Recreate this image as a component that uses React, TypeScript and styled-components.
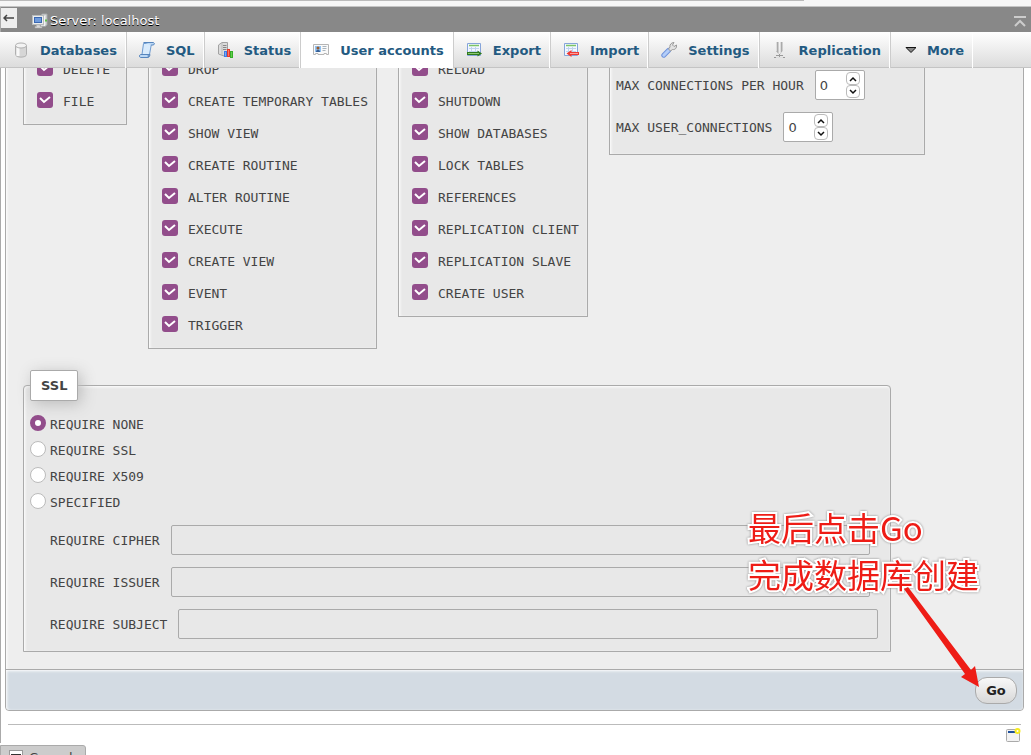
import React from 'react';
import styled, { createGlobalStyle, css } from 'styled-components';

const sans = "'DejaVu Sans', 'Noto Sans CJK SC', sans-serif";
const mono = "'DejaVu Sans Mono', monospace";

const GlobalStyle = createGlobalStyle`
  *, *::before, *::after { box-sizing: border-box; }
  html { height: 100%; overflow: hidden; }
  body {
    margin: 0;
    height: 100%;
    overflow: hidden;
    color: #444;
    background: #fff;
    font-family: ${sans};
    font-size: 13px;
  }
`;

const Page = styled.div`
  position: relative;
  border-left: 1px solid #aaa;
  padding: 32px 7px 0 4px;
`;

const Header = styled.header`
  position: fixed;
  z-index: 5;
  top: 0;
  left: 0;
  right: 0;
`;

const BrowserEdge = styled.div`
  display: flex;
  height: 7px;
  background: #f6f6f6;
  border-bottom: 1px solid #c4c4c4;
`;

const BrowserTab = styled.div`
  width: 78%;
  height: 1px;
  background: #bbb;
`;

const ServerBar = styled.div`
  display: flex;
  align-items: flex-start;
  height: 25px;
  padding-right: 5px;
  background: #888;
  border-left: 1px solid #aaa;
`;

const BackButton = styled.button`
  width: 16px;
  height: 20px;
  margin: 1px 15px 0 0;
  padding: 0;
  border: 0;
  background: #eee;
  line-height: 0;
`;

const ServerLink = styled.a`
  display: flex;
  align-items: flex-end;
  flex: 1;
  height: 22px;
  gap: 2px;
  color: #fff;
  text-decoration: none;
  text-shadow: 0 1px 0 #000;
  line-height: 16px;
`;

const TopButton = styled.button`
  margin: 9px 0 0;
  padding: 0;
  border: 0;
  background: none;
  line-height: 0;
`;

const Tabs = styled.nav`
  display: flex;
  height: 36px;
  padding-left: 1px;
  background: linear-gradient(#fff, #dcdcdc);
  border-bottom: 1px solid #c4c4c4;
`;

const Tab = styled.a<{ $active?: boolean }>`
  display: flex;
  align-items: center;
  gap: 11px;
  height: 36px;
  padding: 0 8px 0 12px;
  border-right: 1px solid #fff;
  box-shadow: 1px 0 0 #ccc;
  margin-right: 1px;
  color: #235a81;
  font-weight: bold;
  text-decoration: none;
  white-space: nowrap;
  ${p => p.$active && css`background: #fff;`}
  &:last-child { box-shadow: none; }
`;

const Panel = styled.main`
  border: 1px solid #aaa;
  border-radius: 4px;
  background: #eee;
  box-shadow: inset 1px 1px 3px #fff;
`;

const Body = styled.div`
  padding: 10px 17px 17px;
`;

const Columns = styled.div`
  display: flex;
  align-items: flex-start;
  gap: 21px;
`;

const box = css`
  margin: 0;
  border: 1px solid #aaa;
  background: #e8e8e8;
  box-shadow: inset 1px 1px 3px #fff;
  font-family: ${mono};
`;

const PrivilegeBox = styled.fieldset`
  ${box}
  min-width: 104px;
  padding: 8px 8px 8px 13px;
`;

const CheckRow = styled.label`
  display: flex;
  align-items: center;
  gap: 10px;
  height: 32px;
  white-space: nowrap;
`;

const Caption = styled.span`
  line-height: 16px;
  padding-top: 3px;
`;

const Check = styled.input`
  appearance: none;
  flex: none;
  width: 16px;
  height: 16px;
  margin: 0;
  border-radius: 3px;
  background: #924d8b;
  &:checked {
    background: #924d8b url("data:image/svg+xml,%3Csvg xmlns='http://www.w3.org/2000/svg' viewBox='0 0 16 16'%3E%3Cpath d='M3 6l4 4 6-5' fill='none' stroke='white' stroke-width='2'/%3E%3C/svg%3E");
  }
`;

const LimitBox = styled.fieldset`
  ${box}
  display: flex;
  flex-direction: column;
  width: 316px;
  gap: 12px;
  padding: 26px 6px 12px;
`;

const LimitRow = styled.div`
  display: flex;
  align-items: center;
  gap: 11px;
  white-space: nowrap;
`;

const Spinner = styled.div`
  display: flex;
  align-items: center;
  width: 50px;
  height: 30px;
  padding: 0 4px;
  border: 1px solid #aaa;
  border-radius: 2px;
  background: #fff;
`;

const NumberBox = styled.input`
  flex: 1;
  width: 10px;
  min-width: 0;
  padding: 0;
  border: 0;
  outline: 0;
  background: none;
  color: #444;
  font: 13px ${sans};
`;

const Steps = styled.div`
  display: flex;
  flex-direction: column;
`;

const Step = styled.button`
  width: 14px;
  height: 13px;
  padding: 0;
  border: 1px solid #bbb;
  border-radius: 4px;
  background: #fff;
  line-height: 0;
`;

const SslBox = styled.fieldset`
  ${box}
  min-width: 0;
  max-width: 868px;
  margin-top: 21px;
  padding: 9px 12px 12px 6px;
  border-radius: 4px 4px 0 0;
`;

const SslLegend = styled.legend`
  padding: 0 10px;
  border: 1px solid #aaa;
  border-radius: 2px;
  background: #fff;
  box-shadow: 3px 3px 15px #bbb;
  font-family: ${sans};
  font-weight: bold;
  line-height: 29px;
`;

const RadioRow = styled.label`
  display: flex;
  align-items: center;
  gap: 4px;
  height: 26px;
`;

const Radio = styled.input`
  appearance: none;
  width: 16px;
  height: 16px;
  margin: 0;
  border: 1px solid #bbb;
  border-radius: 50%;
  background: #fff;
  &:checked { border: 5px solid #924d8b; }
`;

const Fields = styled.div`
  display: flex;
  flex-direction: column;
  gap: 12px;
  padding: 11px 0 0 20px;
`;

const FieldRow = styled.div<{ $inset?: boolean }>`
  display: flex;
  align-items: center;
  gap: 11px;
  padding-right: ${p => (p.$inset ? 8 : 0)}px;
  white-space: nowrap;
`;

const TextBox = styled.input`
  flex: 1;
  min-width: 0;
  height: 30px;
  border: 1px solid #aaa;
  border-radius: 2px;
  background: transparent;
`;

const PanelFooter = styled.footer`
  display: flex;
  justify-content: flex-end;
  padding: 7px 6px 6px;
  border-top: 1px solid #aaa;
  border-radius: 0 0 4px 4px;
  background: #d3dbe3;
  box-shadow: inset 1px 1px 3px #fff;
`;

const GoButton = styled.button`
  height: 27px;
  width: 42px;
  padding: 0;
  border: 1px solid #aaa;
  border-radius: 12px;
  background: linear-gradient(#f8f8f8, #d8d8d8);
  color: #222;
  font: bold 13px ${sans};
`;

const Tools = styled.div`
  display: flex;
  justify-content: flex-end;
  margin: 13px 3px 0;
  padding: 2px 0 0;
  border-top: 1px solid #bbb;
`;

const Console = styled.button`
  position: fixed;
  left: 0;
  bottom: -14px;
  display: flex;
  align-items: flex-start;
  gap: 6px;
  height: 24px;
  padding: 4px 4px 4px 8px;
  border: 1px solid #aaa;
  border-radius: 0 3px 0 0;
  background: #ccc;
  color: #444;
  font: 13px/16px ${sans};
  svg { flex: none; }
`;

const Note = styled.div`
  position: absolute;
  z-index: 6;
  right: 52px;
  top: 504px;
  color: #ee1c16;
  font: 33px/47px 'Noto Sans CJK SC', sans-serif;
  -webkit-text-stroke: 4px #fff;
  paint-order: stroke fill;
  filter: drop-shadow(0 0 1px #888);
  white-space: nowrap;
  pointer-events: none;
`;

const Arrow = styled.svg`
  position: absolute;
  z-index: 7;
  right: 50px;
  top: 585px;
  pointer-events: none;
`;

const Icon = ({ width = 16, children }: { width?: number; children: React.ReactNode }) => (
  <svg width={width} height="16" viewBox={`0 0 ${width} 16`} aria-hidden="true">{children}</svg>
);

const Sheet = () => (
  <>
    <path d="M1.500 1.500h13v12h-13z" fill="#f2f7ff" stroke="#86a5da" />
    <path d="M3 3.500h10" stroke="#7cc466" strokeWidth="1.500" />
    <path d="M3 6.500h10M3 9.500h10M5.500 5v7M9.500 5v7" stroke="#c0d3ee" />
  </>
);

const icons = {
  server: (
    <Icon>
      <path d="M8.500 2.500l2-1.500h4.500v11l-2 1.500H8.500z" fill="#d9dbdc" stroke="#a3a7a8" />
      <path d="M12.500 3v10" stroke="#f4f4f4" />
      <path d="M13 7.500h2" stroke="#5fc04a" strokeWidth="2" />
      <rect x="0.500" y="2.500" width="11" height="9" fill="#eceeee" stroke="#b9bcbd" />
      <rect x="2.500" y="4.500" width="7" height="5" fill="#6f9bdc" stroke="#3b68b2" />
      <path d="M4.500 12h3.500v1.500h2V15H3v-1.500h1.500z" fill="#d8d8d8" stroke="#aaa" strokeWidth="0.500" />
    </Icon>
  ),
  database: (
    <Icon>
      <path d="M2.500 3.500v9c0 3.500 11 3.500 11 0v-9" fill="#d6d6d6" stroke="#b0b0b0" />
      <path d="M5 5v9" stroke="#f8f8f8" strokeWidth="3" />
      <ellipse cx="8" cy="3.500" rx="5.500" ry="2.500" fill="#f3f3f3" stroke="#b0b0b0" />
    </Icon>
  ),
  sql: (
    <Icon>
      <path d="M4.500 1.500h8L10.500 12.500H3z" fill="#d9ebfc" stroke="#6f9bd0" />
      <path d="M4.500 .5h10c1.500.8.8 2.500-.5 2.500h-1.800" fill="#bcd8f5" stroke="#5685bd" />
      <path d="M1.500 12.500h8c-.8 1 .3 3-1 3H1.500c-1.500-.5-1.200-2.500 0-3z" fill="#bcd8f5" stroke="#5685bd" />
      <path d="M9.500 12.500c1 1 0 3-1 3 1.500 0 2.200-1 2.500-3z" fill="#8fb8e6" stroke="#5685bd" />
    </Icon>
  ),
  status: (
    <Icon>
      <path d="M1.500 3L5 .5h5.500V11L7 14l-5.500-2z" fill="#dcdcdc" stroke="#a2a2a2" />
      <path d="M5 1v12" stroke="#bbb" />
      <path d="M6 3.500h3.500M6 5.500h3.500M6 7.500h3.500" stroke="#888" />
      <rect x="7.500" y="9.500" width="2" height="5" fill="#7da8ed" stroke="#3b7be8" />
      <rect x="10.500" y="7.500" width="2" height="7" fill="#f9766a" stroke="#e8382c" />
      <rect x="13.500" y="9.500" width="2" height="6" fill="#62cf4c" stroke="#36ad28" />
    </Icon>
  ),
  users: (
    <Icon>
      <path d="M.5 2.500h15v10h-2v-1H11v1H5v-1H2.500v1h-2z" fill="#fafafa" stroke="#b5b5b5" />
      <rect x="2" y="4" width="6" height="6" fill="#8fc0f0" />
      <circle cx="5" cy="6" r="1.500" fill="#985b2c" />
      <path d="M3 10c0-3 4-3 4 0z" fill="#355e94" />
      <path d="M9.500 4.500h4M9.500 6.500h4M9.500 8.500h3" stroke="#a9b4bd" />
    </Icon>
  ),
  export: (
    <Icon>
      <Sheet />
      <path d="M1 11.500h11" stroke="#2f7a1c" strokeWidth="3" />
      <path d="M11.500 8.500l4.500 3-4.500 3z" fill="#2f7a1c" />
      <path d="M2 11.500h11" stroke="#8cc873" />
    </Icon>
  ),
  import: (
    <Icon>
      <Sheet />
      <path d="M16 11.500H7" stroke="#ef3a34" strokeWidth="3" />
      <path d="M8.500 8l-5 3.500 5 3.500z" fill="#ef3a34" />
      <path d="M15 11.500H7" stroke="#ff9d98" />
    </Icon>
  ),
  settings: (
    <Icon>
      <path d="M2.800 13.200L7.500 8.500" stroke="#6f93dc" strokeWidth="5" strokeLinecap="round" />
      <path d="M2.800 13.200L7.500 8.500" stroke="#b3cdf8" strokeWidth="3" strokeLinecap="round" />
      <path d="M7.500 7l1.500-2c-.5-2 1-4.500 4-4.500L11.500 3l1.500 1.500L15.500 3c.5 3-1.500 5-4 4.500L9.500 9z" fill="#e2e2e2" stroke="#999" />
    </Icon>
  ),
  replication: (
    <Icon>
      <path d="M4 0h2.500v12L4 9zM8 0h2.500v9L8 12z" fill="#aaa" />
      <path d="M4.500 0v9M8.500 0v11" stroke="#dcdcdc" />
      <path d="M7.500 12v3M2 15.500h11M4 13.500h7" stroke="#999" />
      <path d="M4 15.500h7" stroke="#ddd" />
    </Icon>
  ),
  more: (
    <Icon width={13}>
      <path d="M3 5.500h10L8 10.500z" fill="#888" stroke="#111" />
    </Icon>
  ),
};

const tabs: { icon: keyof typeof icons; label: string; active?: boolean }[] = [
  { icon: 'database', label: 'Databases' },
  { icon: 'sql', label: 'SQL' },
  { icon: 'status', label: 'Status' },
  { icon: 'users', label: 'User accounts', active: true },
  { icon: 'export', label: 'Export' },
  { icon: 'import', label: 'Import' },
  { icon: 'settings', label: 'Settings' },
  { icon: 'replication', label: 'Replication' },
  { icon: 'more', label: 'More' },
];

const privileges = [
  ['DELETE', 'FILE'],
  ['DROP', 'CREATE TEMPORARY TABLES', 'SHOW VIEW', 'CREATE ROUTINE', 'ALTER ROUTINE', 'EXECUTE', 'CREATE VIEW', 'EVENT', 'TRIGGER'],
  ['RELOAD', 'SHUTDOWN', 'SHOW DATABASES', 'LOCK TABLES', 'REFERENCES', 'REPLICATION CLIENT', 'REPLICATION SLAVE', 'CREATE USER'],
];

const limits = ['MAX CONNECTIONS PER HOUR', 'MAX USER_CONNECTIONS'];
const sslModes = ['REQUIRE NONE', 'REQUIRE SSL', 'REQUIRE X509', 'SPECIFIED'];
const sslFields = ['REQUIRE CIPHER', 'REQUIRE ISSUER', 'REQUIRE SUBJECT'];

const Chevron = ({ d }: { d: string }) => (
  <svg width="8" height="6" viewBox="0 0 8 6" aria-hidden="true">
    <path d={d} fill="none" stroke="#111" strokeWidth="1.500" />
  </svg>
);

export default function App() {
  return (
    <>
      <GlobalStyle />
      <Header>
        <BrowserEdge><BrowserTab /></BrowserEdge>
        <ServerBar>
          <BackButton aria-label="Hide panel">
            <svg width="12" height="8" viewBox="0 0 12 8"><path d="M1 4h10M4 1L1 4l3 3" fill="none" stroke="#444" strokeWidth="1.500" /></svg>
          </BackButton>
          <ServerLink href="#server">{icons.server}Server: localhost</ServerLink>
          <TopButton aria-label="Scroll to top">
            <svg width="12" height="12" viewBox="0 0 12 12"><path d="M0 1h12M1 10l5-5 5 5" fill="none" stroke="#ccc" strokeWidth="2" /></svg>
          </TopButton>
        </ServerBar>
        <Tabs>
          {tabs.map(t => (
            <Tab key={t.label} href={`#${t.icon}`} $active={t.active}>{icons[t.icon]}{t.label}</Tab>
          ))}
        </Tabs>
      </Header>
      <Page>
        <Panel>
          <Body>
            <Columns>
              {privileges.map(list => (
                <PrivilegeBox key={list[0]}>
                  {list.map(name => (
                    <CheckRow key={name}>
                      <Check type="checkbox" defaultChecked />
                      <Caption>{name}</Caption>
                    </CheckRow>
                  ))}
                </PrivilegeBox>
              ))}
              <LimitBox>
                {limits.map((name, i) => (
                  <LimitRow key={name}>
                    <label htmlFor={`limit${i}`}>{name}</label>
                    <Spinner>
                      <NumberBox id={`limit${i}`} defaultValue="0" />
                      <Steps>
                        <Step aria-label="Increase"><Chevron d="M1 5l3-3 3 3" /></Step>
                        <Step aria-label="Decrease"><Chevron d="M1 1l3 3 3-3" /></Step>
                      </Steps>
                    </Spinner>
                  </LimitRow>
                ))}
              </LimitBox>
            </Columns>
            <SslBox>
              <SslLegend>SSL</SslLegend>
              {sslModes.map((mode, i) => (
                <RadioRow key={mode}>
                  <Radio type="radio" name="ssl" defaultChecked={i === 0} />
                  <Caption>{mode}</Caption>
                </RadioRow>
              ))}
              <Fields>
                {sslFields.map((name, i) => (
                  <FieldRow key={name} $inset={i < 2}>
                    <label htmlFor={`ssl${i}`}>{name}</label>
                    <TextBox id={`ssl${i}`} />
                  </FieldRow>
                ))}
              </Fields>
            </SslBox>
          </Body>
          <PanelFooter><GoButton>Go</GoButton></PanelFooter>
        </Panel>
        <Tools>
          <svg width="16" height="16" viewBox="0 0 16 16" aria-hidden="true">
            <rect x="1.500" y="2.500" width="13" height="12" rx="1" fill="#f2f2f2" stroke="#aaa" />
            <path d="M3 5h8" stroke="#1d4f9c" strokeWidth="2" />
            <circle cx="12.500" cy="4" r="3" fill="#f6ea20" />
            <circle cx="12.500" cy="4" r="1" fill="#fff" />
          </svg>
        </Tools>
        <Note>最后点击Go<br />完成数据库创建</Note>
        <Arrow width="80" height="104" viewBox="0 0 80 104" aria-hidden="true">
          <path d="M3 4L7 2L70 85L74 81L78 102L60 92L64 89Z" fill="#ee1c16" />
        </Arrow>
      </Page>
      <Console>
        <svg width="14" height="14" viewBox="0 0 14 14" aria-hidden="true">
          <rect x="0.500" y="0.500" width="13" height="13" fill="#fff" stroke="#999" />
          <rect x="2" y="4" width="10" height="8" fill="#333" />
        </svg>
        Console
      </Console>
    </>
  );
}
